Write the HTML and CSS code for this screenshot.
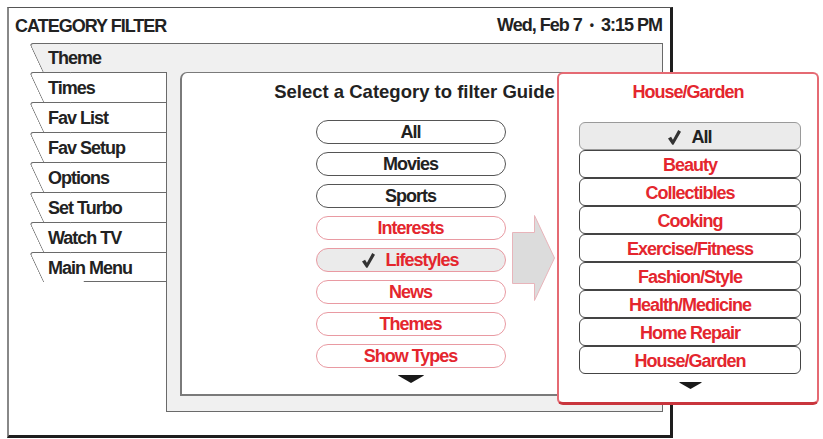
FILE: index.html
```html
<!DOCTYPE html>
<html lang="en">
<head>
  <meta charset="UTF-8">
  <title>Category Filter</title>
  <link rel="stylesheet" href="styles.css">
</head>
<body>
  <div class="screen">
    <header class="screen-header">
      <span class="screen-title">CATEGORY FILTER</span>
      <span class="clock">Wed, Feb 7<span class="dot">&bull;</span>3:15 PM</span>
    </header>

    <div class="tabs">
      <div class="tab tab-active">Theme</div>
      <div class="tabs-body">
        <nav class="tab-list">
          <div class="tab">Times</div>
          <div class="tab">Fav List</div>
          <div class="tab">Fav Setup</div>
          <div class="tab">Options</div>
          <div class="tab">Set Turbo</div>
          <div class="tab">Watch TV</div>
          <div class="tab">Main Menu</div>
        </nav>

        <section class="panel">
          <div class="panel-inner">
            <h2 class="panel-title">Select a Category to filter Guide</h2>
            <div class="picker">
              <div class="picker-col">
                <ul class="pill-list">
                  <li class="pill">All</li>
                  <li class="pill">Movies</li>
                  <li class="pill">Sports</li>
                  <li class="pill pill-red">Interests</li>
                  <li class="pill pill-red pill-selected">
                    <svg class="check" viewBox="0 0 14 16"><path d="M0 9.2 L3.3 7.2 L5.3 10.4 L11 0 L14 1.7 L5.9 15.8 L4.6 15.8 Z"/></svg>Lifestyles
                  </li>
                  <li class="pill pill-red">News</li>
                  <li class="pill pill-red">Themes</li>
                  <li class="pill pill-red">Show Types</li>
                </ul>
                <svg class="more" viewBox="0 0 26 8"><path d="M0 0.5 Q0 0 1 0 L25 0 Q26 0 26 0.5 L13 8 Z"/></svg>
              </div>
              <svg class="arrow" viewBox="0 0 43 86"><polygon points="0.5,17.5 22.5,17.5 22.5,0.5 42.5,43 22.5,85.5 22.5,68.5 0.5,68.5"/></svg>
            </div>
          </div>
        </section>
      </div>
    </div>

    <!-- sub-category popup for the selected category -->
    <div class="popup">
      <h3 class="popup-title">House/Garden</h3>
      <div class="sub-col">
        <ul class="sub-list">
          <li class="sub-item sub-selected">
            <svg class="check" viewBox="0 0 14 16"><path d="M0 9.2 L3.3 7.2 L5.3 10.4 L11 0 L14 1.7 L5.9 15.8 L4.6 15.8 Z"/></svg>All
          </li>
          <li class="sub-item">Beauty</li>
          <li class="sub-item">Collectibles</li>
          <li class="sub-item">Cooking</li>
          <li class="sub-item">Exercise/Fitness</li>
          <li class="sub-item">Fashion/Style</li>
          <li class="sub-item">Health/Medicine</li>
          <li class="sub-item">Home Repair</li>
          <li class="sub-item">House/Garden</li>
        </ul>
        <svg class="more" viewBox="0 0 26 8"><path d="M0 0.5 Q0 0 1 0 L25 0 Q26 0 26 0.5 L13 8 Z"/></svg>
      </div>
    </div>
  </div>
</body>
</html>
```

FILE: styles.css
```css
:root {
  --text-color: #222222;
  --red: #e4262e;
  --red-border: #e99aa2;
  --line: #6a6a6a;
  --panel-bg: #f0f0f0;
  --selected-bg: #ebebeb;
}

* {
  box-sizing: border-box;
}

body {
  margin: 0;
  background-color: #ffffff;
  color: var(--text-color);
  font-family: "Liberation Sans", Arial, sans-serif;
  font-weight: bold;
  font-size: 18px;
  letter-spacing: -1px;
}

ul {
  list-style: none;
  margin: 0;
  padding: 0;
}

/* Outer TV screen frame */
.screen {
  position: relative;
  width: 666px;
  height: 431px;
  margin: 7px 0 0 7px;
  border: 1px solid #555555;
  border-left: 2px solid #888888;
  border-right: 3px solid #1e1e1e;
  border-bottom: 3px solid #1e1e1e;
}

.screen-header {
  display: flex;
  justify-content: space-between;
  align-items: center;
  height: 35px;
  padding: 0 8px 0 6px;
  line-height: 20px;
}

.clock .dot {
  font-size: 12px;
  margin: 0 8px;
  position: relative;
  top: -2px;
}

/* Tabs */
.tabs {
  margin-left: 20px;
  width: 634px;
}

.tab {
  position: relative;
  isolation: isolate;
  margin-left: 14px;
  height: 30px;
  padding: 2px 0 0 5px;
  line-height: 27px;
  border-top: 1px solid var(--line);
  background-color: #ffffff;
  white-space: nowrap;
}

/* slanted left edge of each tab */
.tab::before {
  content: '';
  position: absolute;
  z-index: -1;
  left: -14px;
  top: -1px;
  width: 40px;
  height: calc(100% + 1px);
  border-top: 1px solid var(--line);
  border-left: 1px solid var(--line);
  border-top-left-radius: 4px;
  background: inherit;
  transform: skewX(25deg);
  transform-origin: top left;
}

.tab:last-child {
  border-bottom: 1px solid var(--line);
}

.tab-active {
  height: 29px;
  padding-top: 1px;
  background-color: var(--panel-bg);
  border-right: 1px solid var(--line);
}

.tabs-body {
  display: flex;
}

.tab-list {
  width: 137px;
}

.panel {
  width: 497px;
  height: 340px;
  padding: 0 14px 15px 13px;
  background-color: var(--panel-bg);
  border: 1px solid var(--line);
  border-top: none;
}

.panel-inner {
  height: 100%;
  padding: 8px 8px 0 0;
  background-color: #ffffff;
  border: 2px solid #7a7a7a;
  border-top-width: 1px;
  border-right-width: 1px;
  border-radius: 7px 7px 0 0;
}

.panel-title {
  margin: 0;
  padding-left: 8px;
  font-size: 18.5px;
  letter-spacing: 0;
  line-height: 22px;
  text-align: center;
}

/* Category picker */
.picker {
  display: grid;
  grid-template-columns: 1fr 190px 1fr;
  margin-top: 17px;
}

.picker-col {
  grid-column: 2;
}

.pill-list {
  display: flex;
  flex-direction: column;
  gap: 8px;
}

.pill {
  height: 24px;
  line-height: 23px;
  text-align: center;
  border: 1.5px solid #555555;
  border-radius: 12px;
}

.pill-red {
  color: var(--red);
  border-color: var(--red-border);
}

.pill-selected {
  background-color: var(--selected-bg);
}

.check {
  width: 13px;
  height: 15px;
  margin-right: 10px;
  vertical-align: -2px;
  fill: #333333;
}

.more {
  display: block;
  width: 26px;
  height: 8px;
  margin: 7px auto 0;
  fill: #1a1a1a;
}

.arrow {
  grid-column: 3;
  align-self: start;
  width: 43px;
  height: 86px;
  margin: 95px 0 0 6px;
  fill: #dcdcdc;
  stroke: #e8b4ba;
  stroke-width: 1;
}

/* Sub-category popup */
.popup {
  position: absolute;
  left: 548px;
  top: 64px;
  width: 262px;
  height: 333px;
  padding-top: 7px;
  background-color: #ffffff;
  border: 2px solid #e56a73;
  border-bottom: 3px solid #c9353d;
  border-radius: 6px;
}

.popup-title {
  margin: 0;
  font-size: 18px;
  line-height: 22px;
  text-align: center;
  color: var(--red);
}

.sub-col {
  width: 222px;
  margin: 19px 0 0 20px;
}

.sub-item {
  height: 28px;
  padding-top: 2px;
  line-height: 24px;
  text-align: center;
  color: var(--red);
  border: 1px solid #444444;
  border-radius: 6px;
}

.sub-selected {
  color: var(--text-color);
  background-color: var(--selected-bg);
  border-color: #9a9a9a;
}

.sub-col .more {
  width: 23px;
  height: 7px;
  margin-top: 8px;
}
```
